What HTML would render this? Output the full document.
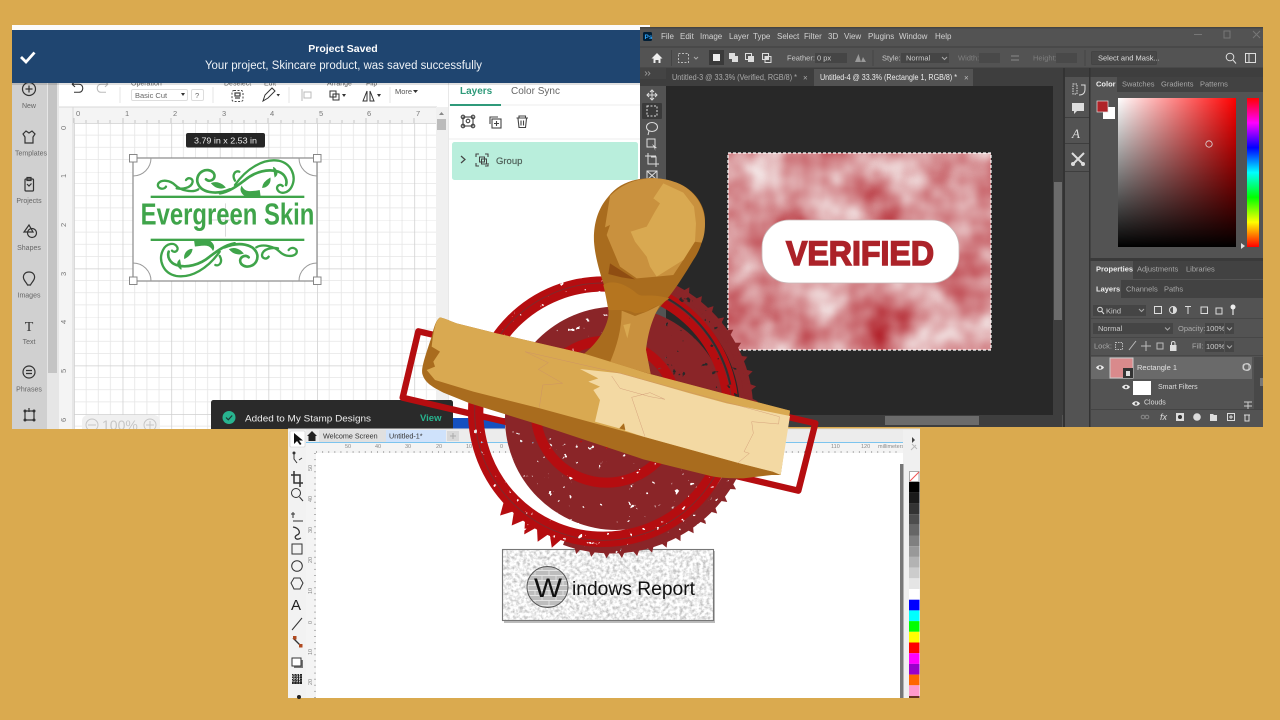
<!DOCTYPE html>
<html><head><meta charset="utf-8"><title>Stamp</title>
<style>html,body{margin:0;padding:0;background:#daaa4f;overflow:hidden}svg{display:block}text{font-family:"Liberation Sans",sans-serif}</style>
</head><body>
<svg width="1280" height="720" viewBox="0 0 1280 720" xmlns="http://www.w3.org/2000/svg">
<defs>
<pattern id="grid" x="74" y="123" width="48.6" height="48.5" patternUnits="userSpaceOnUse">
<rect width="48.6" height="48.5" fill="#fff"/>
<path d="M12.15 0V48.5M24.3 0V48.5M36.45 0V48.5M0 12.1H48.6M0 24.25H48.6M0 36.4H48.6" stroke="#e6e6e6" stroke-width=".8"/>
<path d="M.3 0V48.5M0 .3H48.6" stroke="#cfcfcf" stroke-width=".9"/>
</pattern>
<pattern id="brick" width="14" height="10" patternUnits="userSpaceOnUse"><rect width="14" height="10" fill="#bdbdbd"/><path d="M0 .5H14M0 5.5H14M3 0V5M10 5V10" stroke="#e4e4e4" stroke-width=".9"/></pattern>
<linearGradient id="wr" x1="0" x2="1" y1="0" y2="0"><stop offset="0" stop-color="#fff"/><stop offset="1" stop-color="#f00"/></linearGradient>
<linearGradient id="bk" x1="0" x2="0" y1="0" y2="1"><stop offset="0" stop-color="#000" stop-opacity="0"/><stop offset="1" stop-color="#000"/></linearGradient>
<linearGradient id="hue" x1="0" x2="0" y1="0" y2="1"><stop offset="0" stop-color="#f00"/><stop offset=".167" stop-color="#f0f"/><stop offset=".333" stop-color="#00f"/><stop offset=".5" stop-color="#0ff"/><stop offset=".667" stop-color="#0f0"/><stop offset=".833" stop-color="#ff0"/><stop offset="1" stop-color="#f00"/></linearGradient>
<filter id="cloud" x="0" y="0" width="1" height="1" color-interpolation-filters="sRGB"><feTurbulence type="fractalNoise" baseFrequency=".02" numOctaves="3" seed="11"/><feColorMatrix type="matrix" values=".35 0 0 0 .67  1.05 0 0 0 .05  1 0 0 0 .09  0 0 0 0 1"/></filter>
<filter id="grunge" x="0" y="0" width="1" height="1" color-interpolation-filters="sRGB"><feTurbulence type="fractalNoise" baseFrequency=".3" numOctaves="3" seed="5"/><feColorMatrix type="matrix" values=".6 0 0 0 .63  .6 0 0 0 .63  .6 0 0 0 .63  0 0 0 0 1"/></filter>
<filter id="dist" x="-5%" y="-5%" width="110%" height="110%" color-interpolation-filters="sRGB"><feTurbulence type="fractalNoise" baseFrequency=".045" numOctaves="3" seed="8" result="n"/><feColorMatrix in="n" type="matrix" values="0 0 0 0 1 0 0 0 0 1 0 0 0 0 1 22 0 0 0 -16.2" result="h"/><feComposite in="SourceGraphic" in2="h" operator="out"/></filter>
<polygon id="tooth" points="643,325 665,285 687,325"/>
<g id="t5"><use href="#tooth"/><use href="#tooth" transform="rotate(6 665 725)"/><use href="#tooth" transform="rotate(12 665 725)"/><use href="#tooth" transform="rotate(18 665 725)"/><use href="#tooth" transform="rotate(24 665 725)"/></g>
<clipPath id="cricutclip"><rect x="12" y="25" width="638" height="404"/></clipPath>
</defs>

<rect width="1280" height="720" fill="#daaa4f"/>

<!-- CRICUT -->
<g clip-path="url(#cricutclip)">
<rect x="12" y="25" width="638" height="404" fill="#fff"/>
<rect x="12" y="83" width="35" height="346" fill="#d0d0d0"/>
<rect x="47" y="83" width="12" height="346" fill="#e6e6e6"/>
<rect x="48" y="83" width="9" height="290" fill="#c4c4c4"/>
<rect x="59" y="83" width="390" height="24" fill="#fff"/>
<rect x="59" y="107" width="378" height="322" fill="#f4f4f4"/>
<rect x="74" y="123" width="362" height="306" fill="url(#grid)"/>
<path d="M74 118V123M86 120V123M98 120V123M110 120V123M123 118V123M135 120V123M147 120V123M159 120V123M171 118V123M183 120V123M196 120V123M208 120V123M220 118V123M232 120V123M244 120V123M256 120V123M268 118V123M281 120V123M293 120V123M305 120V123M317 118V123M330 120V123M342 120V123M354 120V123M366 118V123M378 120V123M390 120V123M402 120V123M414 118V123" stroke="#bbb" stroke-width=".8"/>
<path d="M59 107H437M73 107V429" stroke="#d8d8d8"/>
<g font-size="7.5" fill="#777"><text x="76" y="116">0</text><text x="125" y="116">1</text><text x="173" y="116">2</text><text x="222" y="116">3</text><text x="270" y="116">4</text><text x="319" y="116">5</text><text x="367" y="116">6</text><text x="416" y="116">7</text>
<text x="0" y="0" transform="translate(66 130) rotate(-90)">0</text><text transform="translate(66 178) rotate(-90)">1</text><text transform="translate(66 227) rotate(-90)">2</text><text transform="translate(66 276) rotate(-90)">3</text><text transform="translate(66 324) rotate(-90)">4</text><text transform="translate(66 373) rotate(-90)">5</text><text transform="translate(66 422) rotate(-90)">6</text></g>
<rect x="436" y="107" width="12" height="322" fill="#f0f0f0"/><rect x="437" y="119" width="9" height="11" fill="#bbb"/><path d="M439 115L441.500 112L444 115Z" fill="#888"/>
<!-- zoom -->
<rect x="82" y="415" width="78" height="20" rx="6" fill="#f0f0f0"/>
<g fill="none" stroke="#c6c6c6" stroke-width="1"><circle cx="92" cy="425" r="6"/><circle cx="150" cy="425" r="6"/><path d="M88 425H96M146 425H154M150 421V429"/></g><text x="102" y="430" font-size="14" fill="#c6c6c6">100%</text>
<!-- sidebar labels -->
<g font-size="7" fill="#666" text-anchor="middle"><text x="29" y="108">New</text><text x="31" y="155.500" textLength="32" lengthAdjust="spacingAndGlyphs">Templates</text><text x="29" y="203">Projects</text><text x="29" y="250">Shapes</text><text x="29" y="297.500">Images</text><text x="29" y="344">Text</text><text x="29" y="391.500">Phrases</text></g>
<g fill="none" stroke="#333" stroke-width="1.200">
<circle cx="29" cy="89" r="6.500"/><path d="M29 85.500V92.500M25.500 89H32.500"/>
<path d="M23 134L26 131L29 133L32 131L35 134L33 137V143H25V137Z"/>
<rect x="25" y="179" width="8.500" height="12" rx="1"/><rect x="27" y="177.500" width="4" height="3"/><path d="M27 184L29 186L31.500 183.500"/>
<path d="M29 225L24 232H33Z"/><circle cx="32" cy="233" r="4.500"/>
<path d="M29 272C33 272 35 275 34.500 278C34 281 31 283 30.500 285H27.500C27 283 24 281 23.500 278C23 275 25 272 29 272Z"/>
<circle cx="29" cy="372" r="6"/><path d="M26 370.500H32M26 373.500H32"/>
<path d="M25 411H34V420H25ZM29 408V412"/></g>
<text x="29" y="331" font-size="14" text-anchor="middle" fill="#333" style="font-family:'Liberation Serif',serif">T</text>
<g fill="#333"><circle cx="25" cy="411" r="1.500"/><circle cx="34" cy="411" r="1.500"/><circle cx="25" cy="420" r="1.500"/><circle cx="34" cy="420" r="1.500"/></g>
<!-- toolbar -->
<g fill="none" stroke-width="1.100"><path d="M72 88L75 85M72 88L75 91M72 88H79C84 88 84 97 79 97H74" stroke="#333" transform="translate(0 5) scale(1 .9)"/><path d="M108 88L105 85M108 88L105 91M108 88H101C96 88 96 97 101 97H106" stroke="#bbb" transform="translate(0 5) scale(1 .9)"/></g>
<path d="M120 87V103M213 87V103M289 87V103M390 87V103" stroke="#e4e4e4"/>
<g font-size="7" fill="#666"><text x="131" y="85.500">Operation</text><text x="224" y="85.500">Deselect</text><text x="264" y="85.500">Edit</text><text x="327" y="85.500">Arrange</text><text x="366" y="85.500">Flip</text></g>
<rect x="131.500" y="89.500" width="56" height="11" rx="1.500" fill="#fff" stroke="#ddd"/><text x="135" y="98" font-size="7.500" fill="#666">Basic Cut</text><path d="M181 93L185 93L183 96Z" fill="#333"/>
<rect x="191.500" y="89.500" width="12" height="11" rx="1.500" fill="#fff" stroke="#ddd"/><text x="195" y="98" font-size="7.500" fill="#666">?</text>
<rect x="232" y="90.500" width="11" height="11" rx="2" fill="none" stroke="#444" stroke-dasharray="2 1.500"/><path d="M235 93H240V96H235ZM235 98H240" stroke="#444" fill="none" stroke-width="1.200"/>
<path d="M263 101L265 95L272 88L275 91L268 98Z" fill="none" stroke="#333"/><path d="M276.500 94H280L278.200 96.500Z" fill="#333"/>
<rect x="304" y="92" width="7" height="6" fill="none" stroke="#bbb"/><path d="M302 89V101" stroke="#bbb"/>
<rect x="330" y="91" width="6" height="6" fill="none" stroke="#333"/><rect x="333" y="94" width="6" height="6" fill="none" stroke="#333"/><path d="M342 94H346L344 97Z" fill="#333"/>
<path d="M363 101L367 91V101ZM370 91L374 101H370Z" fill="none" stroke="#333"/><path d="M377 94H381L379 97Z" fill="#333"/>
<text x="395" y="94" font-size="7.500" fill="#555">More</text><path d="M413 90H418L415.500 93Z" fill="#333"/>
<!-- right panel -->
<rect x="449" y="83" width="201" height="346" fill="#fff"/>
<path d="M448.500 83V429" stroke="#e8e8e8"/><path d="M449 105H640M449 139H640" stroke="#eee"/>
<text x="460" y="94" font-size="10" font-weight="bold" fill="#2f9a7a">Layers</text><text x="511" y="94" font-size="10" fill="#666" textLength="49">Color Sync</text>
<rect x="450" y="104" width="51" height="2" fill="#2f9a7a"/>
<g fill="none" stroke="#444" stroke-width="1.100"><rect x="463" y="117" width="10" height="9"/><circle cx="463" cy="117" r="1.800"/><circle cx="473" cy="117" r="1.800"/><circle cx="463" cy="126" r="1.800"/><circle cx="473" cy="126" r="1.800"/><circle cx="468" cy="121" r="1.800"/>
<path d="M490 124V117H498"/><rect x="492" y="119" width="9" height="9"/><path d="M496.500 121V126M494 123.500H499"/>
<path d="M516.500 118H528M519 118V116H525.500V118M518 118.500L519 127.500H525.500L526.500 118.500M521 120.500V125.500M523.500 120.500V125.500"/></g>
<rect x="452" y="142" width="186" height="38" rx="2.500" fill="#b9eedc"/>
<path d="M461 156L465 159.500L461 163" fill="none" stroke="#444" stroke-width="1.200"/>
<path d="M476 157V154H479M485 154H488V157M488 163V166H485M479 166H476V163" fill="none" stroke="#444" stroke-width="1.100"/><rect x="479.500" y="157" width="5" height="5" fill="none" stroke="#444"/><rect x="481.500" y="159" width="5" height="5" fill="none" stroke="#444"/>
<text x="496" y="164" font-size="9.500" fill="#4f5f58" stroke="#4f5f58" stroke-width=".2">Group</text>
<!-- artwork -->
<rect x="133" y="158" width="184" height="123" fill="#fff" stroke="#8a8a8a" stroke-width="1.200"/>
<path d="M133 176A18 18 0 0 0 151 158M299 158A18 18 0 0 0 317 176M133 263A18 18 0 0 1 151 281M299 281A18 18 0 0 1 317 263" fill="none" stroke="#9a9a9a"/>
<g transform="translate(120 130) scale(.33333)">
<g id="fl" fill="none" stroke="#3fa44a" stroke-width="7" stroke-linecap="round">
<path d="M345 165C380 115 430 85 475 92C515 100 530 140 515 170C505 190 480 195 472 178C468 168 480 160 488 168"/>
<path d="M300 190C330 185 355 165 375 150C405 125 445 115 475 125C495 132 503 150 498 165" stroke-width="8"/>
<path d="M330 178C290 195 240 190 232 155C228 125 262 110 280 128C292 145 270 160 258 148" stroke-width="8"/>
<path d="M235 178C215 190 180 180 165 165C150 150 125 148 115 160C108 175 130 182 138 170"/>
<path d="M170 175C185 178 215 175 218 155C218 145 205 140 198 150"/>
<path d="M345 152C335 135 345 120 358 125"/>
<path d="M275 160C290 155 305 160 315 172C300 178 285 172 275 160ZM428 172C430 155 445 148 450 145C452 160 440 172 428 172ZM465 140C462 125 462 115 460 112C472 120 475 132 465 140ZM365 170C375 190 395 185 418 182L420 197L375 197C365 190 360 180 365 170Z" fill="#3fa44a" stroke-width="3"/>
</g>
<use href="#fl" transform="rotate(180 322 265)"/>
<rect x="92" y="197" width="461" height="7" fill="#3fa44a"/><rect x="92" y="326" width="461" height="7" fill="#3fa44a"/>
<path d="M317 220V320M270 270H360" stroke="#c8c8c8" stroke-width="2"/>
<text x="62" y="283" font-size="92" font-weight="bold" fill="#3fa44a" textLength="521" lengthAdjust="spacingAndGlyphs">Evergreen Skin</text>
</g>
<g fill="#fff" stroke="#888"><rect x="129.500" y="154.500" width="7.500" height="7.500"/><rect x="313.500" y="154.500" width="7.500" height="7.500"/><rect x="129.500" y="277" width="7.500" height="7.500"/><rect x="313.500" y="277" width="7.500" height="7.500"/></g>
<rect x="186" y="133" width="79" height="14.500" rx="2" fill="#262626"/><text x="194" y="143.500" font-size="8.500" fill="#eee" textLength="63" lengthAdjust="spacingAndGlyphs">3.79  in x 2.53  in</text>
<!-- snackbar -->
<rect x="453" y="410" width="52" height="8" fill="#fff"/><rect x="453" y="418" width="52" height="12" fill="#1450c0"/>
<rect x="211" y="400" width="242" height="32" rx="2.500" fill="#2a2a2a"/>
<circle cx="229" cy="417.500" r="6.500" fill="#28b48f"/><path d="M226 417.500L228.300 419.800L232.200 415.500" fill="none" stroke="#1c3a35" stroke-width="1.200"/>
<text x="245" y="421.500" font-size="9.500" fill="#eee" textLength="126" lengthAdjust="spacingAndGlyphs">Added to My Stamp Designs</text>
<text x="420" y="421" font-size="9.500" font-weight="bold" fill="#28b48f">View</text>
<!-- banner -->
<rect x="12" y="25" width="638" height="5" fill="#fbfbfb"/>
<rect x="12" y="30" width="628" height="53" fill="#1f4570"/><rect x="12" y="83" width="628" height="2" fill="#000" opacity=".12"/>
<path d="M21 57L26 62L34.500 52.500" fill="none" stroke="#fff" stroke-width="2.800"/>
<text x="343" y="52" font-size="10.500" font-weight="bold" fill="#fff" text-anchor="middle">Project Saved</text>
<text x="343.500" y="69" font-size="11.500" fill="#eef2f6" text-anchor="middle" textLength="277" lengthAdjust="spacingAndGlyphs">Your project, Skincare product, was saved successfully</text>
</g>

<!-- PHOTOSHOP -->
<rect x="640" y="27" width="623" height="400" fill="#535353"/>
<rect x="640" y="27" width="623" height="1.500" fill="#444"/>
<path d="M640 47H1263M640 68H1263" stroke="#3f3f3f"/>
<rect x="643" y="32" width="9" height="9" rx="1.500" fill="#001e36"/><text x="644.500" y="39" font-size="6.500" font-weight="bold" fill="#31a8ff">Ps</text>
<g font-size="8" fill="#d2d2d2"><text x="661" y="39">File</text><text x="680" y="39">Edit</text><text x="700" y="39">Image</text><text x="729" y="39">Layer</text><text x="753" y="39">Type</text><text x="777" y="39">Select</text><text x="804" y="39">Filter</text><text x="828" y="39">3D</text><text x="844" y="39">View</text><text x="868" y="39">Plugins</text><text x="899" y="39">Window</text><text x="935" y="39">Help</text></g>
<path d="M1194 34.500H1202" stroke="#777"/><rect x="1224" y="31" width="6" height="7" fill="none" stroke="#777"/><path d="M1253 31L1260 38M1260 31L1253 38" stroke="#777"/>
<!-- options -->
<path d="M651.500 58.500L657 53L662.500 58.500H660.500V63H658.500V60H655.500V63H653.500V58.500Z" fill="#eee"/>
<path d="M671.500 50V66M873 50V66M1085 50V66" stroke="#444"/>
<rect x="678.500" y="53.500" width="10" height="9" fill="none" stroke="#bbb" stroke-dasharray="2 1.500"/><path d="M694 57L696 59L698 57" fill="none" stroke="#aaa"/>
<rect x="709" y="50" width="15" height="15" fill="#3a3a3a"/>
<rect x="713" y="54" width="7" height="7" fill="#eee"/>
<rect x="729" y="53" width="6" height="6" fill="#ddd"/><rect x="732" y="56" width="6" height="6" fill="#ddd"/>
<rect x="745.500" y="53.500" width="6" height="6" fill="none" stroke="#ddd"/><rect x="748" y="56" width="6" height="6" fill="#ddd"/>
<rect x="762.500" y="53.500" width="6" height="6" fill="none" stroke="#ddd"/><rect x="765" y="56.500" width="6" height="6" fill="none" stroke="#ddd"/><rect x="765" y="56.500" width="3.500" height="3" fill="#ddd"/>
<g font-size="7.500" fill="#c8c8c8"><text x="787" y="60.500">Feather:</text><text x="882" y="60.500">Style:</text></g>
<rect x="815" y="53" width="32" height="10" fill="#454545"/><text x="817" y="60.500" font-size="7.500" fill="#ccc">0 px</text>
<path d="M855 62L858.500 54L861 62ZM861 62L863 57L866 62" fill="#999"/>
<rect x="901" y="53" width="48" height="10" fill="#454545"/><text x="906" y="60.500" font-size="7.500" fill="#ccc">Normal</text><path d="M942 57L944.500 59.500L947 57" fill="none" stroke="#aaa"/>
<text x="958" y="60.500" font-size="7.500" fill="#7e7e7e">Width:</text><rect x="979" y="53" width="21" height="10" fill="#494949"/>
<path d="M1011 60H1019M1011 56H1019" stroke="#888"/><text x="1033" y="60.500" font-size="7.500" fill="#7e7e7e">Height:</text><rect x="1056" y="53" width="21" height="10" fill="#494949"/>
<rect x="1091.500" y="51.500" width="65" height="13" rx="1" fill="#484848" stroke="#444"/><text x="1098" y="60.500" font-size="7.500" fill="#ddd">Select and Mask...</text>
<circle cx="1230" cy="57" r="3.800" fill="none" stroke="#ddd"/><path d="M1233 60L1236 63.500" stroke="#ddd"/>
<rect x="1245.500" y="53.500" width="10" height="9" fill="none" stroke="#ddd"/><path d="M1249 54V62" stroke="#ddd"/>
<!-- tab strip -->
<rect x="640" y="68" width="425" height="18" fill="#3e3e3e"/>
<rect x="814" y="69" width="159" height="17" fill="#535353"/>
<text x="672" y="80" font-size="8" fill="#aaa" textLength="125" lengthAdjust="spacingAndGlyphs">Untitled-3 @ 33.3% (Verified, RGB/8) *</text><text x="803" y="80.500" font-size="8" fill="#aaa">×</text>
<text x="820" y="80" font-size="8" fill="#eee" textLength="137" lengthAdjust="spacingAndGlyphs">Untitled-4 @ 33.3% (Rectangle 1, RGB/8) *</text><text x="964" y="80.500" font-size="8" fill="#bbb">×</text>
<!-- canvas -->
<rect x="666" y="86" width="387" height="329" fill="#282828"/>
<rect x="666" y="415" width="396" height="12" fill="#3e3e3e"/><rect x="885" y="416" width="94" height="9" fill="#6b6b6b"/>
<rect x="1053" y="86" width="10" height="329" fill="#3e3e3e"/><rect x="1054" y="182" width="8" height="138" fill="#6b6b6b"/>
<rect x="1063" y="68" width="2" height="359" fill="#333"/>
<!-- document -->
<rect x="728" y="153" width="263" height="197" filter="url(#cloud)"/>
<rect x="728" y="153" width="263" height="197" fill="none" stroke="#fff" stroke-width="1.200" stroke-dasharray="3 2"/>
<rect x="762" y="220" width="197" height="63" rx="27" fill="#fff"/>
<rect x="762" y="220" width="197" height="63" rx="27" fill="none" stroke="#c9b5b5" stroke-width=".8"/>
<text x="786" y="265" font-size="34.500" font-weight="bold" fill="#ac2229" stroke="#ac2229" stroke-width="1.500" textLength="148" lengthAdjust="spacingAndGlyphs">VERIFIED</text>
<!-- tools -->
<rect x="640" y="68" width="26" height="11" fill="#444"/>
<path d="M645 71.500L647 73.500L645 75.500M648 71.500L650 73.500L648 75.500" fill="none" stroke="#aaa" stroke-width=".7"/>
<rect x="642" y="103" width="20" height="16" rx="1" fill="#3a3a3a"/>
<g fill="none" stroke="#ddd" stroke-width="1"><path d="M652 90V100M647 95H657M650 92L652 90L654 92M650 98L652 100L654 98M649 93L647 95L649 97M655 93L657 95L655 97"/><rect x="647" y="106" width="10" height="10" stroke-dasharray="2 1.500"/><ellipse cx="652" cy="127" rx="5.500" ry="4.500"/><path d="M649 131L648 135"/><rect x="647" y="139" width="8" height="8"/><path d="M648 153V164H659M651 157H656V167M645 156H656"/><rect x="647" y="171" width="10" height="9"/><path d="M647 171L657 180M657 171L647 180"/></g>
<path d="M652 144L657 148L654 148.500L656 151Z" fill="#ddd"/>
<!-- dock -->
<rect x="1065" y="68" width="25" height="359" fill="#535353"/>
<rect x="1065" y="68" width="198" height="9" fill="#3e3e3e"/>
<path d="M1065 117.500H1089M1065 143.500H1089M1065 171.500H1089" stroke="#3e3e3e"/>
<path d="M1073 84H1077V94H1073Z" fill="none" stroke="#ddd" stroke-dasharray="1.500 1"/><path d="M1081 85H1085V89C1085 93 1083 95 1079 95" fill="none" stroke="#ddd"/>
<path d="M1072 103H1084V111H1077L1074 114V111H1072Z" fill="#ddd"/>
<text x="1072" y="138" font-size="13" font-style="italic" fill="#ddd" style="font-family:'Liberation Serif',serif">A</text>
<path d="M1072 153L1084 165M1084 153L1072 165" stroke="#ddd" stroke-width="2"/><circle cx="1073" cy="164" r="2" fill="#ddd"/><circle cx="1083" cy="164" r="2" fill="#ddd"/>
<!-- panels -->
<rect x="1089" y="77" width="174" height="350" fill="#535353"/><rect x="1089" y="68" width="1.500" height="359" fill="#333"/>
<rect x="1090" y="77" width="173" height="15" fill="#424242"/><rect x="1091" y="77" width="26" height="15" fill="#535353"/>
<g font-size="7.500" fill="#a8a8a8"><text x="1096" y="86.500" font-weight="bold" fill="#eee">Color</text><text x="1122" y="86.500">Swatches</text><text x="1161" y="86.500">Gradients</text><text x="1200" y="86.500">Patterns</text></g>
<rect x="1103" y="107" width="12" height="12" fill="#fff"/><rect x="1097" y="101" width="11" height="11" fill="#b02328" stroke="#ddd" stroke-width=".7"/>
<rect x="1118" y="98" width="118" height="149" fill="url(#wr)"/><rect x="1118" y="98" width="118" height="149" fill="url(#bk)"/>
<circle cx="1209" cy="144" r="3.200" fill="none" stroke="#ddd" stroke-width=".8"/>
<rect x="1247" y="98" width="12" height="149" fill="url(#hue)"/><path d="M1241 243L1245 246L1241 249Z" fill="#ddd"/>
<rect x="1090" y="258" width="173" height="3" fill="#3a3a3a"/>
<rect x="1090" y="261" width="173" height="18" fill="#424242"/><rect x="1091" y="261" width="42" height="18" fill="#535353"/>
<g font-size="7.500" fill="#a8a8a8"><text x="1096" y="271.500" font-weight="bold" fill="#eee">Properties</text><text x="1137" y="271.500">Adjustments</text><text x="1186" y="271.500">Libraries</text></g>
<rect x="1090" y="280" width="173" height="18" fill="#424242"/><rect x="1091" y="280" width="30" height="18" fill="#535353"/>
<g font-size="7.500" fill="#a8a8a8"><text x="1096" y="291.500" font-weight="bold" fill="#eee">Layers</text><text x="1126" y="291.500">Channels</text><text x="1164" y="291.500">Paths</text></g>
<path d="M1091 318.500H1263M1091 337.500H1263M1091 355.500H1263" stroke="#474747"/>
<rect x="1093" y="305" width="53" height="11" fill="#454545"/><circle cx="1100" cy="309.500" r="2.300" fill="none" stroke="#ddd"/><path d="M1101.500 311L1104 314" stroke="#ddd"/><text x="1106" y="313.500" font-size="7.500" fill="#ccc">Kind</text><path d="M1139 309L1141.500 311.500L1144 309" fill="none" stroke="#aaa"/>
<g fill="none" stroke="#ddd"><rect x="1154.500" y="306.500" width="7" height="7"/><circle cx="1173" cy="310" r="3.500"/><path d="M1185 306.500H1191M1188 306.500V314"/><rect x="1201" y="307" width="6.500" height="6.500"/><rect x="1216" y="308" width="6" height="6"/></g>
<path d="M1173 306.500A3.500 3.500 0 0 1 1173 313.500Z" fill="#ddd"/><rect x="1232" y="309" width="2" height="6" fill="#aaa"/><circle cx="1233" cy="307" r="2.500" fill="#eee"/>
<rect x="1093" y="323" width="80" height="11" fill="#454545"/><text x="1098" y="331" font-size="7.500" fill="#ccc">Normal</text><path d="M1165 327.500L1167.500 330L1170 327.500" fill="none" stroke="#aaa"/>
<text x="1178" y="331" font-size="7.500" fill="#aaa">Opacity:</text><rect x="1205" y="323" width="29" height="11" fill="#454545"/><text x="1206" y="331" font-size="7.500" fill="#ccc">100%</text><path d="M1224.500 323V334" stroke="#555"/><path d="M1227 327.500L1229.500 330L1232 327.500" fill="none" stroke="#aaa"/>
<text x="1094" y="348.500" font-size="7.500" fill="#aaa">Lock:</text>
<g fill="none" stroke="#bbb"><rect x="1115.500" y="342.500" width="7" height="7" stroke-dasharray="1.500 1"/><path d="M1129 350L1136 341"/><path d="M1146 341V351M1141 346H1151"/><rect x="1157" y="343" width="6" height="6"/></g><rect x="1170" y="345" width="6.500" height="6" fill="#ddd"/><path d="M1171.500 345V343C1171.500 341 1175 341 1175 343V345" fill="none" stroke="#ddd"/>
<text x="1192" y="348.500" font-size="7.500" fill="#aaa">Fill:</text><rect x="1205" y="341" width="29" height="11" fill="#454545"/><text x="1206" y="349" font-size="7.500" fill="#ccc">100%</text><path d="M1224.500 341V352" stroke="#555"/><path d="M1227 345.500L1229.500 348L1232 345.500" fill="none" stroke="#aaa"/>
<rect x="1091" y="357" width="161" height="22" fill="#6a6a6a"/>
<rect x="1110" y="358" width="23" height="20" fill="#d98a8c" stroke="#ccc"/><rect x="1123" y="368" width="10" height="10" fill="#333"/><rect x="1126" y="371" width="4" height="5" fill="#ddd"/>
<path d="M1096 367.500C1098 364.500 1102 364.500 1104 367.500C1102 370.500 1098 370.500 1096 367.500Z" fill="#eee"/><circle cx="1100" cy="367.500" r="1.300" fill="#555"/>
<text x="1137" y="370" font-size="7.500" fill="#e2e2e2">Rectangle 1</text>
<rect x="1243" y="364" width="6" height="6" rx="2" fill="none" stroke="#ccc"/><circle cx="1247" cy="367" r="3.500" fill="none" stroke="#ccc"/>
<rect x="1133" y="381" width="18" height="14" fill="#fff"/>
<path d="M1122 387C1124 384 1128 384 1130 387C1128 390 1124 390 1122 387Z" fill="#eee"/><circle cx="1126" cy="387" r="1.300" fill="#555"/>
<text x="1158" y="389" font-size="7" fill="#ddd">Smart Filters</text>
<path d="M1132 403.500C1134 400.500 1138 400.500 1140 403.500C1138 406.500 1134 406.500 1132 403.500Z" fill="#eee"/><circle cx="1136" cy="403.500" r="1.300" fill="#555"/>
<text x="1144" y="404.500" font-size="7" fill="#ddd">Clouds</text>
<path d="M1244 402H1252M1244 406H1252M1248 402V409" stroke="#ccc"/>
<path d="M1091 409.500H1263" stroke="#444"/>
<rect x="1254" y="357" width="9" height="52" fill="#484848"/><rect x="1260" y="378" width="3" height="8" fill="#777"/>
<g fill="#ddd"><circle cx="1143" cy="417" r="1.800" fill="none" stroke="#888"/><circle cx="1147" cy="417" r="1.800" fill="none" stroke="#888"/><text x="1160" y="420" font-size="9" font-style="italic" fill="#ddd">fx</text>
<rect x="1176" y="413" width="8" height="8"/><circle cx="1180" cy="417" r="2" fill="#333"/><circle cx="1197" cy="417" r="3.800"/><path d="M1210 414H1213L1214 415H1217V421H1210Z"/>
<rect x="1227.500" y="413.500" width="7" height="7" fill="none" stroke="#ddd"/><path d="M1231 415V419M1229 417H1233" stroke="#ddd"/><path d="M1244 415H1250M1245 415V421H1249V415" fill="none" stroke="#ddd"/></g>

<!-- CORELDRAW -->
<rect x="288" y="429" width="632" height="269" fill="#fff"/>
<rect x="288" y="429" width="632" height="13" fill="#ececec"/>
<rect x="319" y="430" width="67" height="12" fill="#e0e0e0"/><rect x="386" y="430" width="60" height="12" fill="#cfe2fb"/><rect x="447" y="431" width="12" height="10" fill="#d8d8d8"/><path d="M453 433V439M450 436H456" stroke="#aaa"/>
<path d="M307 436L312 431L317 436H315.500V441H308.500V436Z" fill="#222"/>
<text x="323" y="438.500" font-size="7.200" fill="#333">Welcome Screen</text><text x="389" y="438.500" font-size="7.200" fill="#333">Untitled-1*</text>
<rect x="306" y="442" width="597" height="1.200" fill="#7cc4ee"/>
<rect x="306" y="443" width="597" height="10" fill="#f4f4f4"/><rect x="306" y="453" width="10" height="245" fill="#f4f4f4"/>
<path d="M316 452H900" stroke="#9c9c9c" stroke-width="1.500" stroke-dasharray="1 5.100"/><path d="M315 453V698" stroke="#9c9c9c" stroke-width="1.500" stroke-dasharray="1 5.100"/>
<g font-size="5.500" fill="#888"><text x="345" y="448">50</text><text x="375" y="448">40</text><text x="405" y="448">30</text><text x="436" y="448">20</text><text x="466" y="448">10</text><text x="500" y="448">0</text><text x="831" y="448">110</text><text x="861" y="448">120</text><text x="878" y="448">millimeters</text>
<text transform="translate(312 471) rotate(-90)">50</text><text transform="translate(312 502) rotate(-90)">40</text><text transform="translate(312 533) rotate(-90)">30</text><text transform="translate(312 563) rotate(-90)">20</text><text transform="translate(312 594) rotate(-90)">10</text><text transform="translate(312 624) rotate(-90)">0</text><text transform="translate(312 655) rotate(-90)">10</text><text transform="translate(312 685) rotate(-90)">20</text></g>
<rect x="903" y="429" width="17" height="269" fill="#f0f0f0"/><rect x="900" y="464" width="3.500" height="234" fill="#777"/>
<g fill="none" stroke="#888"><path d="M911 450L916 445M912 444L917 449" stroke="#bbb"/></g>
<path d="M912 437L915 440L912 443Z" fill="#444"/>
<rect x="909.500" y="471.500" width="9.500" height="10" fill="#fff" stroke="#aaa"/><path d="M910 481L919 472" stroke="#f05050"/>
<g>
<rect x="909" y="482" width="10.500" height="10.700" fill="#000"/><rect x="909" y="492.700" width="10.500" height="10.700" fill="#1a1a1a"/><rect x="909" y="503.400" width="10.500" height="10.700" fill="#333"/><rect x="909" y="514.100" width="10.500" height="10.700" fill="#4d4d4d"/><rect x="909" y="524.800" width="10.500" height="10.700" fill="#666"/><rect x="909" y="535.500" width="10.500" height="10.700" fill="#808080"/><rect x="909" y="546.200" width="10.500" height="10.700" fill="#999"/><rect x="909" y="556.900" width="10.500" height="10.700" fill="#b3b3b3"/><rect x="909" y="567.600" width="10.500" height="10.700" fill="#ccc"/><rect x="909" y="578.300" width="10.500" height="10.700" fill="#e5e5e5"/><rect x="909" y="589" width="10.500" height="10.700" fill="#fff"/><rect x="909" y="599.700" width="10.500" height="10.700" fill="#00f"/><rect x="909" y="610.400" width="10.500" height="10.700" fill="#0ff"/><rect x="909" y="621.100" width="10.500" height="10.700" fill="#0f0"/><rect x="909" y="631.800" width="10.500" height="10.700" fill="#ff0"/><rect x="909" y="642.500" width="10.500" height="10.700" fill="#f00"/><rect x="909" y="653.200" width="10.500" height="10.700" fill="#f0f"/><rect x="909" y="663.900" width="10.500" height="10.700" fill="#90c"/><rect x="909" y="674.600" width="10.500" height="10.700" fill="#f60"/><rect x="909" y="685.300" width="10.500" height="10.700" fill="#f9c"/><rect x="909" y="696" width="10.500" height="2" fill="#632"/>
</g>
<rect x="288" y="429" width="18" height="269" fill="#f2f2f2"/>
<rect x="290" y="431" width="15" height="16" rx="1" fill="#fff" stroke="#ccc" stroke-width=".6"/>
<path d="M294 433V444L297 441L300 445L301.500 444L299 440.500H303Z" fill="#111"/>
<g fill="none" stroke="#333" stroke-width="1">
<path d="M294 452L294 459L297 463M299 460L302 458"/><circle cx="294" cy="453" r="1"/>
<path d="M294 471V483H303M291 475H300V487" stroke-width="1.500"/>
<circle cx="296" cy="493" r="4.500"/><path d="M299.500 497L303 501"/>
<path d="M293 512V518M291 514H295M293 521H303"/>
<path d="M293 527C300 528 301 534 297 535C293 537 296 541 301 538" stroke-width="1.300"/>
<rect x="292" y="544" width="10" height="10"/><circle cx="297" cy="566" r="5.300"/><path d="M294 578H300L303 583L300 589H294L291 583Z"/>
<path d="M292 630L302 618"/><path d="M293 638L301 646" stroke-width="1.300"/>
</g>
<text x="291" y="610" font-size="15" fill="#222">A</text>
<rect x="293" y="636" width="3.500" height="3.500" fill="#b04a20"/><rect x="299" y="644" width="3.500" height="3.500" fill="#b04a20"/>
<rect x="294" y="660" width="9" height="8" fill="#777"/><rect x="292" y="658" width="9" height="8" fill="#fff" stroke="#333"/>
<rect x="292" y="674" width="10" height="10" fill="#222"/><path d="M292 676H302M292 678.500H302M292 681H302M294 674V684M297 674V684M299.500 674V684" stroke="#ddd" stroke-width="1" stroke-dasharray="1.200 1.200"/>
<circle cx="299" cy="697" r="2" fill="#222"/>
<path d="M288 429H920" stroke="#e0e0e0"/>
<!-- logo -->
<rect x="504" y="551" width="211" height="72" fill="#8f8f8f" opacity=".6"/>
<rect x="502.500" y="549.500" width="211" height="71" filter="url(#grunge)"/>
<rect x="502.500" y="549.500" width="211" height="71" fill="none" stroke="#777" stroke-width="1.100"/>
<circle cx="547.500" cy="587" r="20.500" fill="url(#brick)" stroke="#555"/>
<text x="534" y="597" font-size="27" fill="#111" textLength="28" lengthAdjust="spacingAndGlyphs">W</text>
<text x="572" y="595" font-size="19" fill="#111" textLength="123" lengthAdjust="spacingAndGlyphs">indows Report</text>

<!-- STAMP -->
<g transform="translate(390 170) scale(.33333)">
<path d="M85 484L1276 760L1225 962L38 683Z" fill="none" stroke="#b50d10" stroke-width="19" stroke-linejoin="round"/>
<g filter="url(#dist)">
<g fill="#8a2528">
<path d="M803 344A405 405 0 1 1 526 1106" fill="none" stroke="#8a2528" stroke-width="40"/>
<use href="#t5" transform="rotate(20 665 725)"/><use href="#t5" transform="rotate(50 665 725)"/><use href="#t5" transform="rotate(80 665 725)"/><use href="#t5" transform="rotate(110 665 725)"/><use href="#t5" transform="rotate(140 665 725)"/><use href="#t5" transform="rotate(170 665 725)"/>
</g>
<g fill="#b50d10"><use href="#t5" transform="rotate(200 650 725)"/></g>
<circle cx="680" cy="745" r="335" fill="#8a2528"/>
<circle cx="640" cy="725" r="383" fill="none" stroke="#b50d10" stroke-width="46"/>
<circle cx="640" cy="725" r="386" fill="none" stroke="#7e2a2c" stroke-width="3"/>
<circle cx="650" cy="725" r="213" fill="none" stroke="#b50d10" stroke-width="30"/>
<path d="M835 387A390 390 0 0 1 1021 644" fill="none" stroke="#2f2f33" stroke-width="6"/>
</g>
<!-- handle -->
<path d="M655 80C620 120 610 170 612 215C615 260 630 310 642 345C650 375 658 400 655 440C645 490 610 530 580 553L782 612L768 540C770 480 785 440 815 405C845 375 880 320 910 270C935 235 945 190 945 150C945 100 905 50 850 35C790 15 700 20 655 80Z" fill="#a96c1e"/>
<path d="M660 78C720 18 800 15 860 38C915 60 945 110 945 160C945 190 940 205 935 218L912 215L885 262L850 315L800 320L740 325L690 290L650 195L660 165L645 172Z" fill="#c9913e"/>
<path d="M820 40L880 68L912 110L918 160L915 215L880 270L800 320L780 290L770 260L735 215L722 185L770 170L795 125L810 100L790 85Z" fill="#d9a951"/>
<path d="M660 280L735 328L695 322L655 312Z" fill="#8f4d12"/>
<path d="M640 345C660 330 700 335 740 370C760 385 775 368 838 385L810 405C790 410 775 420 770 425L735 430C710 415 680 422 655 420C650 390 645 365 640 345Z" fill="#b5751f"/>
<path d="M695 422L735 438L770 425L810 405C790 440 775 480 768 540L782 612L660 577C680 530 695 480 695 422Z" fill="#c9913e"/>
<path d="M700 465L722 460L712 505Z" fill="#d9a951"/>
<!-- base -->
<path d="M150 442C165 445 185 455 200 460L320 490L580 550L780 612L1000 670L1200 722L1172 915L1145 915L1060 925C1020 925 985 925 950 915L760 868L450 765L240 700L160 668C130 652 105 640 97 612C93 595 105 560 125 500C132 470 138 450 150 442Z" fill="#a96c1e"/>
<path d="M150 442C165 445 185 455 200 460L320 490L580 550L780 612L1000 670L1200 722L1198 738L1150 905L1050 880L760 800L615 760L450 715L250 665L135 630L110 600L135 590L130 575L150 545L125 530C132 470 138 450 150 442Z" fill="#d9a951"/>
<path d="M570 597L690 610L900 670L1010 700L1200 738L1172 915L1148 905L1050 880L760 800L705 782L700 760L688 775L615 755L630 690L610 660L630 650L595 635L625 625Z" fill="#f3d9a3"/>
<g fill="none" stroke="#c98c6c" stroke-width="1.500" opacity=".7"><path d="M405 545L475 578L445 598L518 640L458 645L448 712"/><path d="M405 545L690 610L1168 740L1166 762L1085 755L1090 790L1062 845L1078 850L1042 880"/><path d="M665 618L690 655L780 680L825 688L780 668L725 682L765 800"/></g>
<path d="M688 775L702 760L706 780Z" fill="#a96c1e"/>
</g>
</svg>
</body></html>
